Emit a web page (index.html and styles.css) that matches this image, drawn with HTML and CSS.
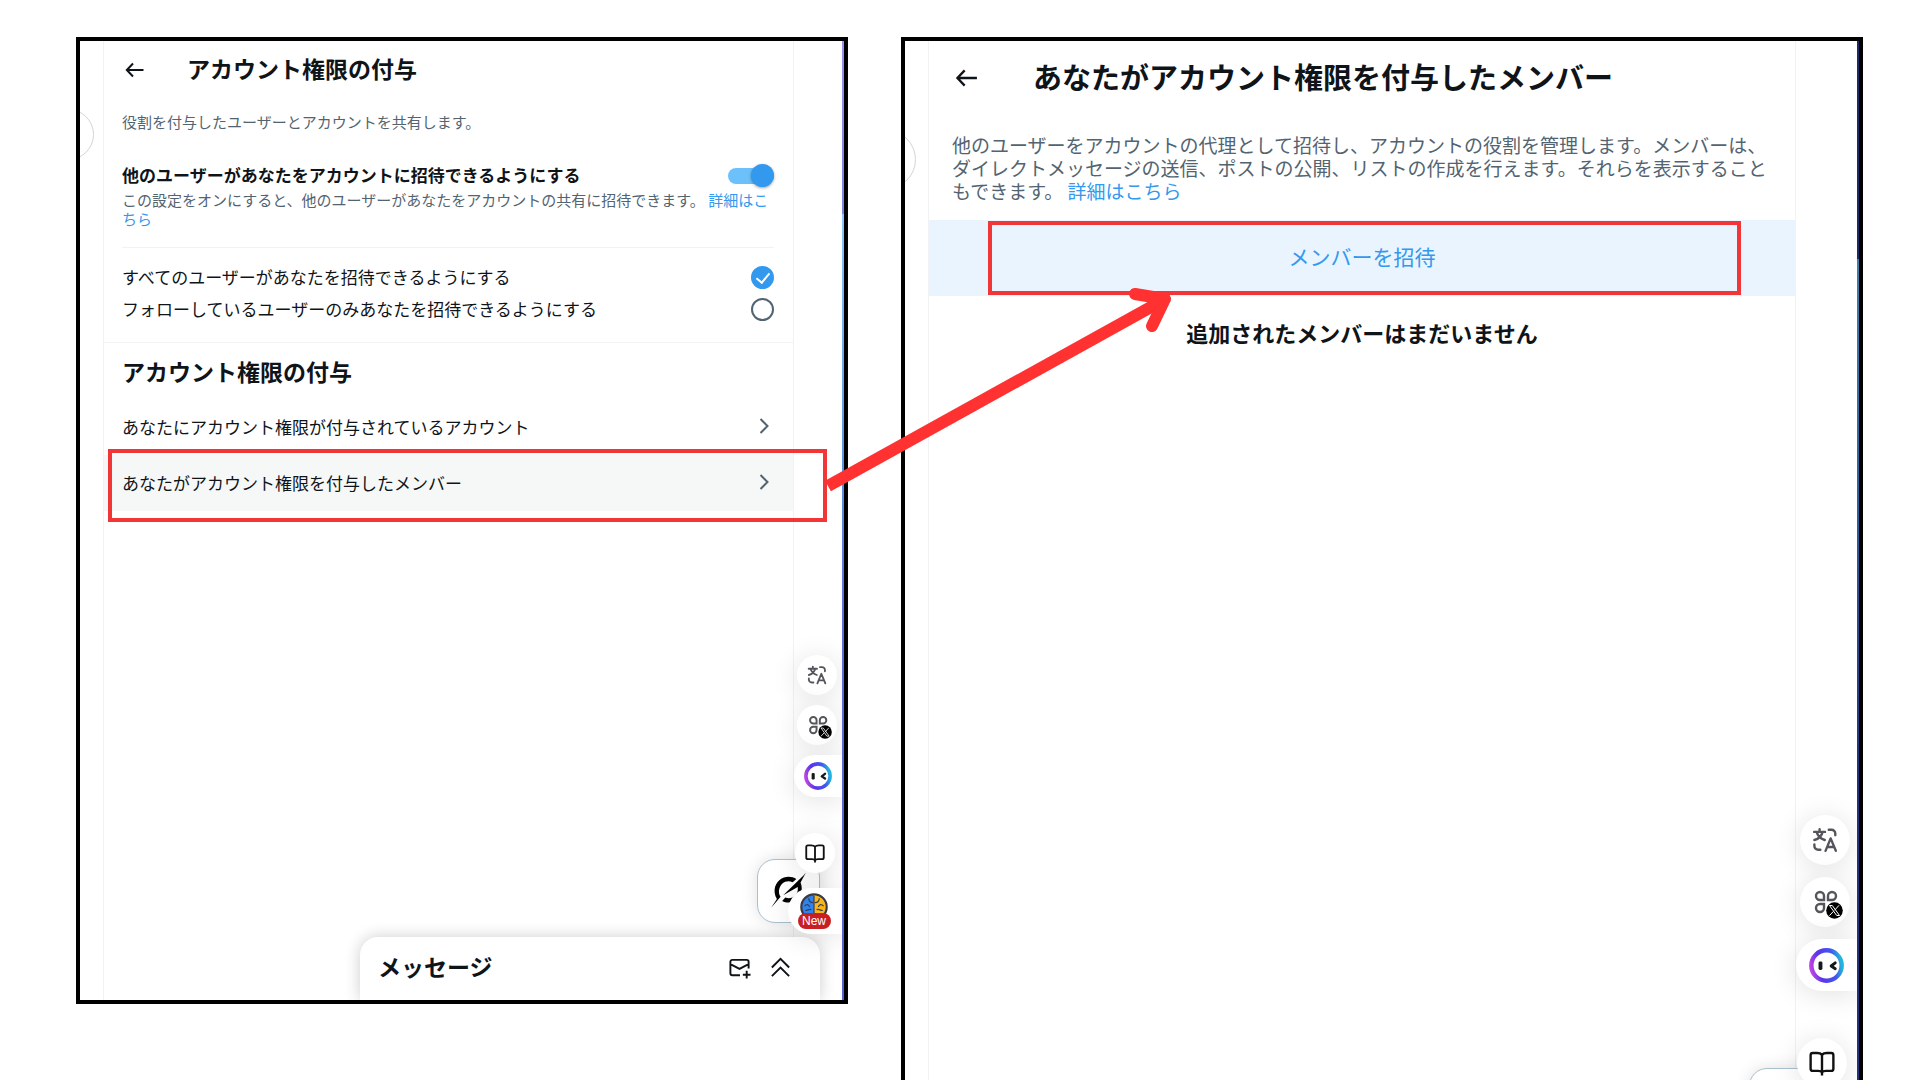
FILE: index.html
```html
<!DOCTYPE html>
<html lang="ja">
<head>
  <meta charset="UTF-8">
  <title>アカウント権限の付与</title>
  <link rel="stylesheet" href="styles.css">
</head>
<body>

  <!-- shared icons -->
  <svg class="sprite" aria-hidden="true">
    <defs>
      <linearGradient id="faceRing" x1="0" y1="0.7" x2="1" y2="0.5">
        <stop offset="0" stop-color="#c044e4"/>
        <stop offset="0.3" stop-color="#5a35ea"/>
        <stop offset="0.75" stop-color="#4456ee"/>
        <stop offset="1" stop-color="#22b4dc"/>
      </linearGradient>
    </defs>
    <symbol id="icon-back" viewBox="0 0 24 24">
      <path d="M10 5.500L3.800 12l6.200 6.500M4 12h16.500" fill="none" stroke="currentColor" stroke-width="2"/>
    </symbol>
    <symbol id="icon-chevron" viewBox="0 0 10 16">
      <path d="M1.500 1l7 7-7 7" fill="none" stroke="currentColor" stroke-width="2"/>
    </symbol>
    <symbol id="icon-translate" viewBox="0 0 24 24">
      <g fill="none" stroke="currentColor" stroke-width="2.200" stroke-linecap="round" stroke-linejoin="round">
        <path d="M2 4.500h10M7 2v2.500M9.800 4.500C9 8 6 11 2.200 12M4.300 4.500C5.200 8 8 10.800 11.800 12"/>
        <path d="M15.500 2.500h2.500a3.500 3.500 0 0 1 3.500 3.500v1.500"/>
        <path d="M2.200 16v1.500a3.500 3.500 0 0 0 3.500 3.500h2"/>
        <path d="M12.500 22l4.700-11.500L22 22M14 18.500h6.400"/>
      </g>
    </symbol>
    <symbol id="icon-apps" viewBox="0 0 32 32">
      <g fill="none" stroke="#55565c" stroke-width="2.400">
        <path d="M13 13H9a4 4 0 1 1 4-4z"/>
        <path d="M17 13h4a4 4 0 1 0-4-4z"/>
        <path d="M13 17H9a4 4 0 1 0 4 4z"/>
      </g>
      <circle cx="23.500" cy="23.500" r="8.300" fill="#000"/>
      <path d="M18.500 18.500h2.800l7.200 10h-2.800zM28 18.300l-4.400 5M22.400 24.400l-4 4.300" fill="none" stroke="#fff" stroke-width="1"/>
    </symbol>
    <symbol id="icon-face" viewBox="0 0 36 36">
      <circle cx="18" cy="18" r="15.600" fill="#fff" stroke="url(#faceRing)" stroke-width="4.600"/>
      <rect x="9.800" y="14" width="4" height="8.500" rx="1.500" fill="#16181c"/>
      <path d="M27 15.200l-4.200 3.300 4.200 2.800" fill="none" stroke="#16181c" stroke-width="3" stroke-linecap="round" stroke-linejoin="round"/>
    </symbol>
    <symbol id="icon-book" viewBox="0 0 24 24">
      <path d="M12 4.500C11 3.300 9.500 2.800 7.500 2.800H3.500a2 2 0 0 0-2 2v12.500a2 2 0 0 0 2 2h5c2 0 3 .5 3.500 1.500.5-1 1.500-1.500 3.500-1.500h5a2 2 0 0 0 2-2v-12.500a2 2 0 0 0-2-2h-4c-2 0-3.500.5-4.500 1.700zM12 4.500v19" fill="none" stroke="#111" stroke-width="2.200" stroke-linejoin="round"/>
    </symbol>
  </svg>

  <main class="stage">

    <section class="panel panel-settings">
      <button class="collapse" aria-label="開く"></button>

      <div class="column">
        <header class="head">
          <button class="back" aria-label="戻る"><svg><use href="#icon-back"/></svg></button>
          <h1>アカウント権限の付与</h1>
        </header>

        <p class="lead">役割を付与したユーザーとアカウントを共有します。</p>

        <div class="invite">
          <div class="toggle-row">
            <label for="allow">他のユーザーがあなたをアカウントに招待できるようにする</label>
            <input type="checkbox" class="toggle" id="allow" checked>
          </div>
          <p class="hint">この設定をオンにすると、他のユーザーがあなたをアカウントの共有に招待できます。 <a href="#">詳細はこちら</a></p>
        </div>

        <div class="choices">
          <div class="choice">
            <label for="everyone">すべてのユーザーがあなたを招待できるようにする</label>
            <input type="radio" name="who" id="everyone" checked>
          </div>
          <div class="choice">
            <label for="following">フォローしているユーザーのみあなたを招待できるようにする</label>
            <input type="radio" name="who" id="following">
          </div>
        </div>

        <h2>アカウント権限の付与</h2>
        <nav>
          <a href="#" class="item">あなたにアカウント権限が付与されているアカウント<svg><use href="#icon-chevron"/></svg></a>
          <a href="#" class="item item-active">あなたがアカウント権限を付与したメンバー<svg><use href="#icon-chevron"/></svg><span class="marker"></span></a>
        </nav>
      </div>

      <button class="grok" aria-label="Grok">
        <svg viewBox="0 0 40 40">
          <path d="M8.500 27.500C5 22 5.500 14 11 9.500c5-4 11.500-3.800 16-1l-3.500 3.200c-3.500-1.700-7-1.200-9.800 1.200C10 16.500 9.500 22 12 25.500L3 36zM14.500 24L34 5l2-2.500-5 9.500c2 5 1.500 11-2.500 15-4.500 4.500-10 5-15 2.500l3-3.200c3.500 1.200 7 .5 9.500-2.200 2-2.200 2.800-4.700 2.300-8z" fill="#000"/>
        </svg>
      </button>

      <div class="drawer">
        <h2>メッセージ</h2>
        <button aria-label="新しいメッセージ">
          <svg viewBox="0 0 24 24" fill="none" stroke="#0f1419" stroke-width="2">
            <path d="M12.500 20H4.500a2 2 0 0 1-2-2V6a2 2 0 0 1 2-2h15a2 2 0 0 1 2 2v7M2.500 8.500l9.500 5 9.500-5M19.500 15.500v8M15.500 19.500h8"/>
          </svg>
        </button>
        <button aria-label="展開">
          <svg viewBox="0 0 24 24" fill="none" stroke="#0f1419" stroke-width="2">
            <path d="M3 12l9-9 9 9M3 21l9-9 9 9"/>
          </svg>
        </button>
      </div>

      <div class="rail">
        <button class="round" aria-label="翻訳"><svg class="glyph"><use href="#icon-translate"/></svg></button>
        <button class="round" aria-label="アプリ"><svg class="apps"><use href="#icon-apps"/></svg></button>
        <button class="pill" aria-label="アシスタント"><svg class="face"><use href="#icon-face"/></svg></button>
        <button class="round book" aria-label="リーダー"><svg class="glyph"><use href="#icon-book"/></svg></button>
        <button class="pill promo">
          <svg viewBox="0 0 32 32" aria-hidden="true">
            <circle cx="16" cy="16" r="14.500" fill="#2e83ee" stroke="#3a3a40" stroke-width="2.500"/>
            <path d="M16 2.800a13.200 13.200 0 0 1 0 26.400z" fill="#fdb515"/>
            <path d="M16 3v24M5 15c3-3 5-2 6 1M10 6c0 4 2 5 5 5M6 20c3 0 4-2 7-1M27 15c-3-3-5-2-6 1M22 6c0 4-2 5-5 5M26 20c-3 0-4-2-7-1" fill="none" stroke="#33405c" stroke-width="1.400"/>
          </svg>
          <span>New</span>
        </button>
      </div>
    </section>

    <section class="panel panel-members">
      <button class="collapse" aria-label="開く"></button>

      <div class="column">
        <header class="head">
          <button class="back" aria-label="戻る"><svg><use href="#icon-back"/></svg></button>
          <h1>あなたがアカウント権限を付与したメンバー</h1>
        </header>

        <p class="lead">他のユーザーをアカウントの代理として招待し、アカウントの役割を管理します。メンバーは、ダイレクトメッセージの送信、ポストの公開、リストの作成を行えます。それらを表示することもできます。 <a href="#">詳細はこちら</a></p>

        <button class="add-member">メンバーを招待<span class="marker"></span></button>
        <p class="empty">追加されたメンバーはまだいません</p>
      </div>

      <div class="grok"></div>

      <div class="rail">
        <button class="round" aria-label="翻訳"><svg class="glyph"><use href="#icon-translate"/></svg></button>
        <button class="round" aria-label="アプリ"><svg class="apps"><use href="#icon-apps"/></svg></button>
        <button class="pill" aria-label="アシスタント"><svg class="face"><use href="#icon-face"/></svg></button>
        <button class="round book" aria-label="リーダー"><svg class="glyph"><use href="#icon-book"/></svg></button>
      </div>
    </section>

    <svg class="arrow" viewBox="0 0 360 220" aria-hidden="true">
      <path d="M8 206L340 22" stroke-width="12"/>
      <path d="M315 14l30 5-13 27" stroke-width="12" stroke-linecap="round" stroke-linejoin="round"/>
    </svg>
  </main>

</body>
</html>
```
FILE: styles.css
```css
:root {
  --text: #0f1419;
  --muted: #536471;
  --blue: #3399ee;
  --line: #f0f2f3;
  --red: #f23638;
}

* {
  box-sizing: border-box;
}

body {
  margin: 0;
  background: #fff;
  color: var(--text);
  font-family: "Noto Sans CJK JP", sans-serif;
}

h1,
h2,
p {
  margin: 0;
}

a {
  color: var(--blue);
  text-decoration: none;
}

button {
  padding: 0;
  border: none;
  background: none;
  color: inherit;
  font-family: inherit;
  cursor: pointer;
}

svg {
  display: block;
}

.sprite {
  position: absolute;
  width: 0;
  height: 0;
}

.stage {
  position: relative;
  display: grid;
  grid-template-columns: 772fr 962fr;
  gap: 53px;
  align-items: start;
  height: 100vh;
  padding: 37px 57px 0 76px;
  overflow: hidden;
}

/* panels */
.panel {
  position: relative;
  display: flex;
  border: 4px solid #000;
  overflow: hidden;
}

.panel::after {
  content: "";
  position: absolute;
  top: 0;
  right: 0;
  bottom: 0;
  width: 2px;
}

.panel-settings {
  min-height: calc(100vh - 113px);
  padding: 0 50px 0 23px;
}

.panel-settings::after {
  background: linear-gradient(#9a94ee 0, #7d86e0 18%, #8cc8f8 18%, #5b96e0 45%, #6470dc 60%, #5a62d0 100%);
}

.panel-members {
  min-height: calc(100vh - 37px);
  padding: 0 63px 0 23px;
  border-bottom: none;
}

.panel-members::after {
  background: linear-gradient(#1c2a68 0, #1c2a68 21%, #3f7fae 21%, #2e5f9e 45%, #22347e 70%);
}

.column {
  flex: 1;
  border-left: 1px solid var(--line);
  border-right: 1px solid var(--line);
}

.collapse {
  position: absolute;
  top: 68px;
  left: -37px;
  width: 51px;
  height: 51px;
  border: 1px solid #cfd5d9;
  border-radius: 50%;
}

.head {
  display: flex;
  align-items: center;
  gap: 40px;
  height: 57px;
  padding: 0 19px;
}

.head h1 {
  padding-bottom: 4px;
  font-size: 23px;
  line-height: 28px;
}

.back svg {
  width: 24px;
  height: 24px;
}

.lead {
  margin-top: 14px;
  padding: 0 19px 0 18px;
  color: var(--muted);
  font-size: 15px;
  line-height: 19px;
}

.marker {
  position: absolute;
  border: 4px solid var(--red);
}

/* invitation settings */
.invite {
  margin: 32px 19px 0 18px;
  padding-bottom: 19px;
  border-bottom: 1px solid var(--line);
}

.toggle-row,
.choice {
  display: flex;
  align-items: center;
  justify-content: space-between;
}

.toggle-row label {
  font-size: 17px;
  font-weight: 700;
  line-height: 24px;
}

.toggle {
  position: relative;
  width: 46px;
  height: 16px;
  margin: 2px 0 0;
  border-radius: 8px;
  background: #6cc1fb;
  appearance: none;
}

.toggle::before {
  content: "";
  position: absolute;
  top: -4px;
  right: 0;
  width: 23px;
  height: 23px;
  border-radius: 50%;
  background: var(--blue);
  box-shadow: 0 1px 3px rgba(0, 0, 0, 0.35);
}

.hint {
  margin-top: 3px;
  color: var(--muted);
  font-size: 15px;
  line-height: 19px;
}

.choices {
  padding: 14px 19px 16px 18px;
  border-bottom: 1px solid var(--line);
}

.choice {
  height: 32px;
  font-size: 17px;
}

.choice label {
  padding-bottom: 3px;
}

.choice input {
  display: grid;
  place-items: center;
  width: 23px;
  height: 23px;
  margin: 0 0 1px;
  border: 2px solid var(--muted);
  border-radius: 50%;
  appearance: none;
}

.choice input:checked {
  border-color: var(--blue);
  background: var(--blue);
}

.choice input:checked::before {
  content: "";
  width: 6px;
  height: 11px;
  margin-bottom: 3px;
  border: solid #fff;
  border-width: 0 2px 2px 0;
  transform: rotate(40deg);
}

.column h2 {
  padding: 14px 18px;
  font-size: 23px;
  line-height: 28px;
}

.item {
  position: relative;
  display: flex;
  align-items: center;
  justify-content: space-between;
  height: 56px;
  padding: 0 24px 2px 18px;
  color: var(--text);
  font-size: 17px;
}

.item svg {
  width: 10px;
  height: 16px;
  color: var(--muted);
}

.item-active {
  background: #f6f8f8;
}

.item .marker {
  top: -6px;
  right: -34px;
  bottom: -11px;
  left: 4px;
}

/* members */
.panel-members .collapse {
  top: 89px;
  left: -48px;
  width: 59px;
  height: 59px;
}

.panel-members .head {
  gap: 52px;
  height: 74px;
  padding: 0 24px;
}

.panel-members h1 {
  font-size: 29px;
  line-height: 36px;
}

.panel-members .back svg {
  width: 28px;
  height: 28px;
}

.panel-members .lead {
  margin-top: 18px;
  padding: 0 20px 0 23px;
  font-size: 19px;
  line-height: 23px;
}

.add-member {
  position: relative;
  display: block;
  width: 100%;
  height: 76px;
  margin-top: 18px;
  padding-bottom: 4px;
  background: #e9f4fe;
  color: var(--blue);
  font-size: 21px;
}

.add-member .marker {
  top: 1px;
  right: 54px;
  bottom: 1px;
  left: 59px;
}

.empty {
  margin-top: 22px;
  font-size: 22px;
  font-weight: 700;
  line-height: 28px;
  text-align: center;
}

/* floating tools */
.rail {
  position: absolute;
  right: 2px;
  bottom: 66px;
  display: flex;
  flex-direction: column;
  align-items: flex-end;
  gap: 10px;
}

.round,
.pill {
  display: flex;
  align-items: center;
  justify-content: center;
  background: #fff;
  box-shadow: 0 3px 28px rgba(0, 0, 0, 0.12);
}

.round {
  width: 40px;
  height: 40px;
  margin-right: 5px;
  border-radius: 50%;
}

.pill {
  width: 48px;
  height: 42px;
  border-radius: 21px 0 0 21px;
}

.glyph {
  width: 20px;
  height: 20px;
  color: #55565c;
}

.apps {
  width: 26px;
  height: 26px;
  margin: 2px 0 0 3px;
}

.face {
  width: 28px;
  height: 28px;
}

.rail .book {
  margin-top: 26px;
  margin-right: 7px;
}

.promo {
  flex-direction: column;
  width: 54px;
  height: 46px;
  margin-top: 5px;
  padding-right: 2px;
  border-radius: 23px 0 0 23px;
}

.promo svg {
  width: 28px;
  height: 28px;
}

.promo span {
  width: 33px;
  height: 16px;
  margin-top: -8px;
  border-radius: 8px;
  background: #c81f23;
  color: #fff;
  font-family: "Liberation Sans", sans-serif;
  font-size: 12px;
  line-height: 16px;
  z-index: 1;
}

.grok {
  position: absolute;
  right: 24px;
  bottom: 77px;
  display: flex;
  align-items: center;
  justify-content: center;
  width: 63px;
  height: 64px;
  border: 1px solid #a9c0ce;
  border-radius: 18px;
  background: #fff;
  box-shadow: 0 0 16px rgba(0, 0, 0, 0.12);
}

.grok svg {
  width: 42px;
  height: 42px;
}

.drawer {
  position: absolute;
  right: 24px;
  bottom: 0;
  left: 280px;
  display: flex;
  align-items: center;
  gap: 18px;
  height: 63px;
  padding: 0 28px 2px 18px;
  border-radius: 18px 18px 0 0;
  background: #fff;
  box-shadow: 0 0 16px rgba(0, 0, 0, 0.2);
}

.drawer h2 {
  flex: 1;
  padding-bottom: 4px;
  font-size: 23px;
  line-height: 28px;
}

.drawer button svg {
  width: 23px;
  height: 23px;
}

.panel-members .rail {
  bottom: -8px;
  gap: 12px;
}

.panel-members .round {
  width: 50px;
  height: 50px;
  margin-right: 7px;
}

.panel-members .pill {
  width: 61px;
  height: 52px;
  border-radius: 26px 0 0 26px;
}

.panel-members .glyph {
  width: 26px;
  height: 26px;
}

.panel-members .apps {
  width: 32px;
  height: 32px;
}

.panel-members .face {
  width: 35px;
  height: 35px;
}

.panel-members .book {
  margin-top: 35px;
  margin-right: 10px;
}

.panel-members .grok {
  right: 29px;
  bottom: -69px;
  width: 81px;
  height: 81px;
}

/* pointer from the selected row to the invite button */
.arrow {
  position: absolute;
  top: 280px;
  left: 820px;
  width: 360px;
  height: 220px;
  fill: none;
  stroke: #ff3131;
}
```
